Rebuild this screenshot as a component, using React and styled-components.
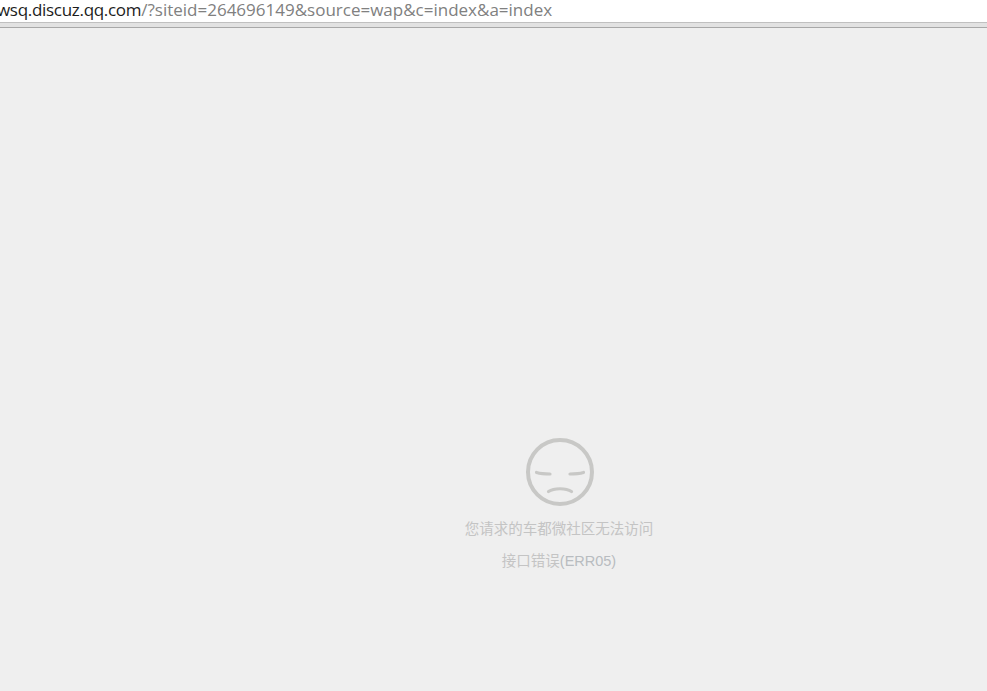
import React from "react";
import styled, { createGlobalStyle } from "styled-components";

const GlobalStyle = createGlobalStyle`
  html, body {
    margin: 0;
    padding: 0;
    height: 100%;
    background: #efefef;
  }
  #root {
    height: 100%;
  }
`;

const Page = styled.div`
  display: flex;
  flex-direction: column;
  height: 691px;
  overflow: hidden;
`;

const AddressBar = styled.div`
  height: 22px;
  flex: none;
  background: #fff;
  overflow: hidden;
  white-space: nowrap;
  font-family: "Open Sans", "Noto Sans", sans-serif;
  font-size: 17px;
  line-height: 19px;
  color: #808080;
  text-indent: -3px;
`;

const Domain = styled.span`
  color: #1c1c1c;
  letter-spacing: -0.3px;
`;

const Chrome = styled.div`
  height: 4px;
  flex: none;
  background: #e2e2e2;
  border-top: 1px solid #c0c0c0;
  border-bottom: 1px solid #a8a8a8;
`;

const Content = styled.main`
  flex: 1;
  display: flex;
  flex-direction: column;
  align-items: center;
  padding: 409px 0 0 131px;
`;

const Face = styled.svg`
  display: block;
  width: 70px;
  height: 70px;
  margin-left: 2px;
`;

const Message = styled.p`
  margin: ${(p) => p.$top}px 0 0;
  font-family: "Liberation Sans", "Noto Sans CJK SC", sans-serif;
  font-size: 14.5px;
  line-height: 20px;
  color: #c4c4c4;
  white-space: nowrap;
`;

const Code = styled.span`
  color: #b8bcc0;
`;

export default function App() {
  return (
    <Page>
      <GlobalStyle />
      <AddressBar>
        <Domain>wsq.discuz.qq.com</Domain>/?siteid=264696149&amp;source=wap&amp;c=index&amp;a=index
      </AddressBar>
      <Chrome />
      <Content>
        <Face viewBox="0 0 70 70" fill="none" stroke="#c8c8c6" strokeLinecap="round">
          <circle cx="35" cy="35" r="32" strokeWidth="4" />
          <path d="M11.5 35.5C16 36.8 20 37 25 37" strokeWidth="3.2" />
          <path d="M45 37C50 37 54 36.8 58.5 35.5" strokeWidth="3.2" />
          <path d="M23.5 54.5C29 50.8 41 50.8 46.5 54.5" strokeWidth="3.2" />
        </Face>
        <Message $top={12}>您请求的车都微社区无法访问</Message>
        <Message $top={12}>
          接口错误<Code>(ERR05)</Code>
        </Message>
      </Content>
    </Page>
  );
}
